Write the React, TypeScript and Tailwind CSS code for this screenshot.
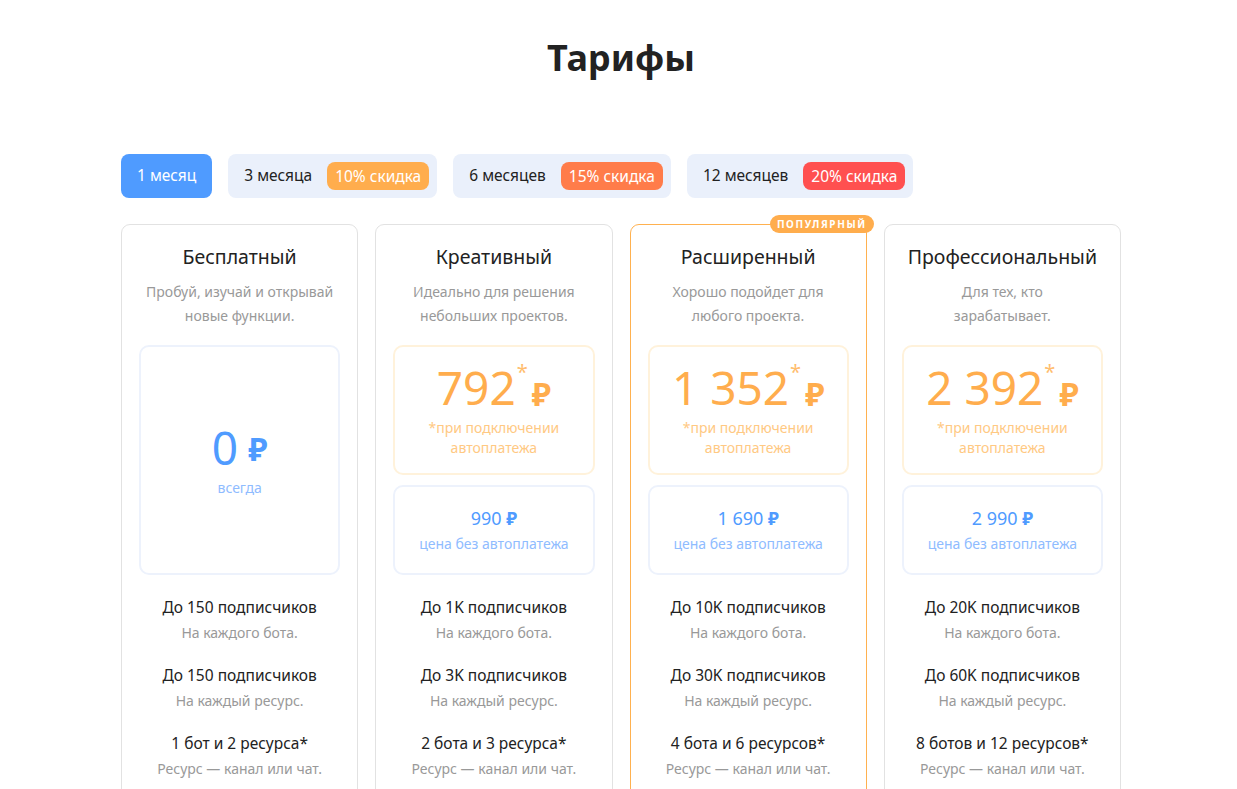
import React from "react";

const periods = [
  { id: 1, label: "1 месяц", active: true },
  { id: 3, label: "3 месяца", discount: "10% скидка", color: "bg-[#ffad4d]" },
  { id: 6, label: "6 месяцев", discount: "15% скидка", color: "bg-[#ff7c4a]" },
  { id: 12, label: "12 месяцев", discount: "20% скидка", color: "bg-[#ff5050]" },
];

type Plan = {
  name: string;
  desc: string[];
  price: string;
  full?: string;
  popular?: boolean;
  features: { title: string; sub: string }[];
};

const plans: Plan[] = [
  {
    name: "Бесплатный",
    desc: ["Пробуй, изучай и открывай", "новые функции."],
    price: "0",
    features: [
      { title: "До 150 подписчиков", sub: "На каждого бота." },
      { title: "До 150 подписчиков", sub: "На каждый ресурс." },
      { title: "1 бот и 2 ресурса*", sub: "Ресурс — канал или чат." },
    ],
  },
  {
    name: "Креативный",
    desc: ["Идеально для решения", "небольших проектов."],
    price: "792",
    full: "990",
    features: [
      { title: "До 1K подписчиков", sub: "На каждого бота." },
      { title: "До 3K подписчиков", sub: "На каждый ресурс." },
      { title: "2 бота и 3 ресурса*", sub: "Ресурс — канал или чат." },
    ],
  },
  {
    name: "Расширенный",
    desc: ["Хорошо подойдет для", "любого проекта."],
    price: "1 352",
    full: "1 690",
    popular: true,
    features: [
      { title: "До 10K подписчиков", sub: "На каждого бота." },
      { title: "До 30K подписчиков", sub: "На каждый ресурс." },
      { title: "4 бота и 6 ресурсов*", sub: "Ресурс — канал или чат." },
    ],
  },
  {
    name: "Профессиональный",
    desc: ["Для тех, кто", "зарабатывает."],
    price: "2 392",
    full: "2 990",
    features: [
      { title: "До 20K подписчиков", sub: "На каждого бота." },
      { title: "До 60K подписчиков", sub: "На каждый ресурс." },
      { title: "8 ботов и 12 ресурсов*", sub: "Ресурс — канал или чат." },
    ],
  },
];

function PlanCard({ plan }: { plan: Plan }) {
  return (
    <div
      className={`relative rounded-[9px] border px-[17px] pt-[18px] pb-6 ${
        plan.popular ? "border-[#ffb14f]" : "border-[#e2e2e2]"
      }`}
    >
      {plan.popular && (
        <span className="absolute -top-[10px] right-[-8px] rounded-full bg-[#ffad4d] px-[7px] text-[10px] font-bold leading-[18px] tracking-[1.6px] text-white">
          ПОПУЛЯРНЫЙ
        </span>
      )}
      <div className="text-center text-[19.5px] leading-[28px] text-[#222]">{plan.name}</div>
      <div className="mt-[9px] text-center text-[14px] leading-[24px] text-[#999]">
        {plan.desc.map((d) => (
          <div key={d}>{d}</div>
        ))}
      </div>

      {plan.full ? (
        <div className="mt-[17px] flex flex-col gap-[10px]">
          <div className="flex h-[130px] flex-col items-center justify-center rounded-[10px] border-2 border-[#fff2db]">
            <div className="flex items-start text-[#ffad4d]">
              <span className="text-[46px] leading-[50px]">{plan.price}</span>
              <span className="ml-[1px] text-[20px] leading-[20px] text-[#ffbd6e]">*</span>
              <span className="ml-[4px] mt-[12px] text-[32px] font-bold leading-[40px]">₽</span>
            </div>
            <div className="mt-[4px] text-center text-[14px] leading-[20px] text-[#ffc983]">
              *при подключении
              <br />
              автоплатежа
            </div>
          </div>
          <div className="flex h-[90px] flex-col items-center justify-center rounded-[10px] border-2 border-[#edf2fc]">
            <div className="text-[18px] leading-[24px] text-[#4f9bff]">
              {plan.full} <span className="font-bold">₽</span>
            </div>
            <div className="mt-[4px] text-[14px] leading-[20px] text-[#8fbcff]">цена без автоплатежа</div>
          </div>
        </div>
      ) : (
        <div className="mt-[17px] flex h-[230px] flex-col items-center justify-center rounded-[10px] border-2 border-[#edf2fc]">
          <div className="flex items-center text-[#4f9bff]">
            <span className="text-[46px] leading-[50px]">{plan.price}</span>
            <span className="ml-[10px] mt-[4px] text-[32px] font-bold leading-[40px]">₽</span>
          </div>
          <div className="mt-[6px] text-[14px] leading-[20px] text-[#8fbcff]">всегда</div>
        </div>
      )}

      <div className="mt-[20px] flex flex-col gap-[18px]">
        {plan.features.map((f, i) => (
          <div key={i} className="text-center">
            <div className="text-[15.5px] leading-[24px] text-[#222]">{f.title}</div>
            <div className="mt-[2px] text-[14px] leading-[24px] text-[#999]">{f.sub}</div>
          </div>
        ))}
      </div>
    </div>
  );
}

export default function App() {
  return (
    <div className="min-h-screen bg-white font-['Noto_Sans',sans-serif]">
      <div className="ml-[121px] w-[1000px] pt-[33px]">
        <h1 className="text-center text-[36px] font-bold leading-[50px] text-[#222]">Тарифы</h1>

        <div className="mt-[71px] flex gap-4">
          {periods.map((p) =>
            p.active ? (
              <button
                key={p.id}
                className="h-[44px] rounded-[8px] bg-[#4f9bff] px-4 text-[15.5px] text-white"
              >
                {p.label}
              </button>
            ) : (
              <button
                key={p.id}
                className="flex h-[44px] items-center gap-[15px] rounded-[8px] bg-[#eaf0fb] pl-4 pr-2 text-[15.5px] text-[#222]"
              >
                <span>{p.label}</span>
                <span className={`${p.color} rounded-[8px] px-2 leading-[28px] text-white`}>
                  {p.discount}
                </span>
              </button>
            )
          )}
        </div>

        <div className="mt-[26px] grid grid-cols-4 gap-[17px]">
          {plans.map((plan) => (
            <PlanCard key={plan.name} plan={plan} />
          ))}
        </div>
      </div>
    </div>
  );
}
